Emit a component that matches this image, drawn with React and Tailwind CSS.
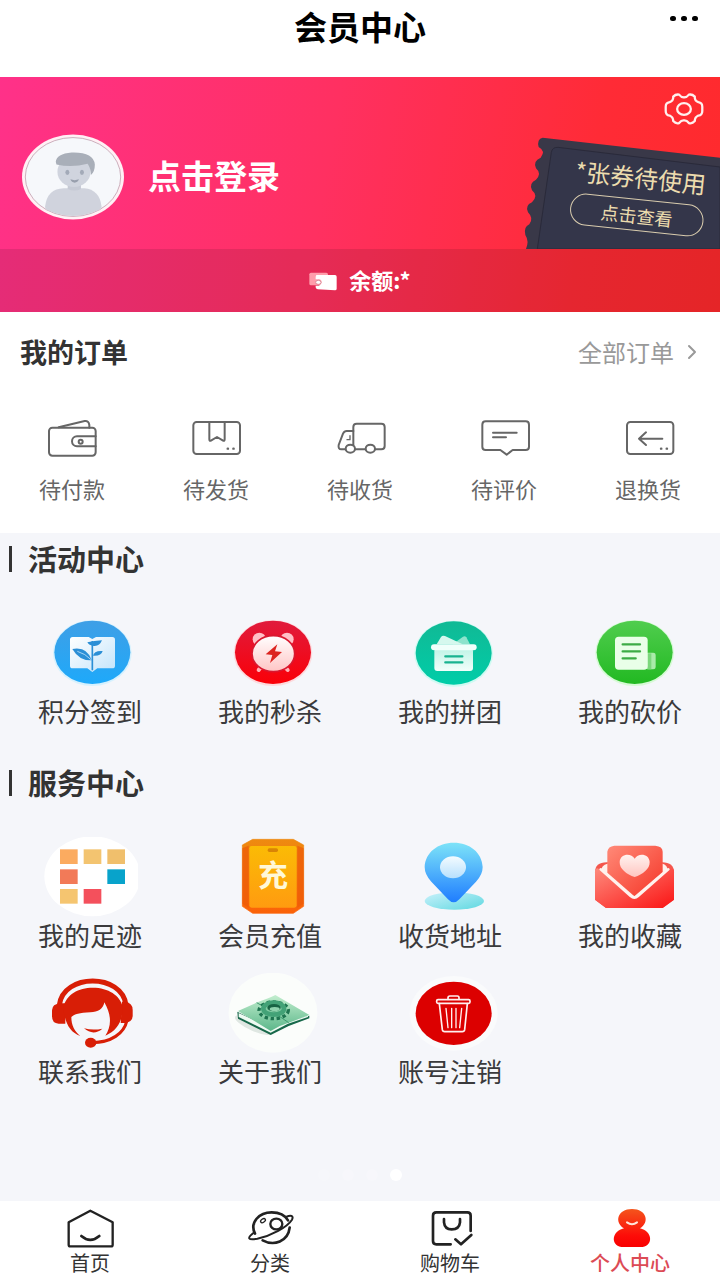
import { ChevronRight } from 'lucide-react';

function OrderIcon({ children }) {
  return (
    <svg
      viewBox="0 0 168 144"
      className="h-12 w-14"
      fill="none"
      stroke="#666"
      strokeWidth="6"
      strokeLinecap="round"
      strokeLinejoin="round"
      aria-hidden="true"
    >
      {children}
    </svg>
  );
}

function MenuIcon({ children }) {
  return (
    <svg viewBox="0 0 288 240" className="h-20 w-24" aria-hidden="true">
      {children}
    </svg>
  );
}

function TabIcon({ children }) {
  return (
    <svg
      viewBox="0 0 144 120"
      className="h-10 w-12"
      fill="none"
      stroke="#222"
      strokeWidth="8"
      strokeLinecap="round"
      strokeLinejoin="round"
      aria-hidden="true"
    >
      {children}
    </svg>
  );
}

function Gradient({ id, from, to, diagonal }) {
  return (
    <linearGradient id={id} x1="0" y1="0" x2={diagonal ? '1' : '0'} y2="1">
      <stop offset="0" stopColor={from} />
      <stop offset="1" stopColor={to} />
    </linearGradient>
  );
}

const orders = [
  {
    label: '待付款',
    icon: (
      <OrderIcon>
        <rect x="15" y="38" width="140" height="84" rx="10" />
        <path d="M44 37 L122 18 Q134 16 136 30 V38" />
        <path d="M155 64 H99 a15 15 0 0 0 0 30 H155" />
        <circle cx="110" cy="80" r="6" />
      </OrderIcon>
    ),
  },
  {
    label: '待发货',
    icon: (
      <OrderIcon>
        <rect x="16" y="21" width="140" height="96" rx="10" />
        <path d="M64 21 V73 Q64 80 70 76 L87 66 L104 76 Q110 80 110 73 V21" />
        <path d="M119 101 h1 M136 101 h1" strokeWidth="7" />
      </OrderIcon>
    ),
  },
  {
    label: '待收货',
    icon: (
      <OrderIcon>
        <path d="M64 90 V36 q0 -10 10 -10 h74 q10 0 10 10 v57 q0 10 -10 10 h-18" />
        <path d="M64 48 H44 q-7 0 -11 8 L20 90 q-2 13 8 13 h12 M70 103 H100" />
        <path d="M54 62 v12 h-9" strokeWidth="4" />
        <ellipse cx="55" cy="101" rx="14" ry="12" />
        <ellipse cx="115" cy="101" rx="14" ry="12" />
      </OrderIcon>
    ),
  },
  {
    label: '待评价',
    icon: (
      <OrderIcon>
        <path d="M73 105 H29 q-10 0 -10 -10 V29 q0 -10 10 -10 H149 q10 0 10 10 V95 q0 10 -10 10 H110 L92 119 Z" />
        <path d="M51 53 H122 M51 67 H90" />
      </OrderIcon>
    ),
  },
  {
    label: '退换货',
    icon: (
      <OrderIcon>
        <rect x="21" y="21" width="139" height="96" rx="10" />
        <path d="M57 71 H127 M78 52 L57 71 L78 90" />
        <path d="M123 101 h1 M140 101 h1" strokeWidth="7" />
      </OrderIcon>
    ),
  },
];

const activities = [
  {
    label: '积分签到',
    icon: (
      <MenuIcon>
        <defs>
          <Gradient id="sign" from="#3f9fe6" to="#1ea9fa" />
          <Gradient id="signBook" from="#ffffff" to="#c3e4fb" diagonal />
        </defs>
        <ellipse cx="151" cy="120" rx="118" ry="99" fill="#c9efff" opacity="0.7" />
        <ellipse cx="151" cy="118" rx="114" ry="95" fill="url(#sign)" />
        <path d="M92 72 H140 L151 78 L162 72 H211 Q219 72 219 80 V158 Q219 166 211 166 H166 L151 177 L136 166 H92 Q84 166 84 158 V80 Q84 72 92 72 Z" fill="url(#signBook)" />
        <path d="M151 172 V84" stroke="#2b8fd6" strokeWidth="5" fill="none" />
        <path d="M91 108 Q136 100 149 142 Q112 144 91 108 Z" fill="#2b8fd6" />
        <path d="M106 115 Q130 122 147 140" stroke="#a5d5f6" strokeWidth="3" fill="none" />
        <path d="M136 88 Q156 84 180 82 Q172 102 152 98 Q142 98 136 88 Z" fill="#2b8fd6" />
        <path d="M153 128 Q156 112 182 114 Q178 130 153 128 Z" fill="#2b8fd6" />
      </MenuIcon>
    ),
  },
  {
    label: '我的秒杀',
    icon: (
      <MenuIcon>
        <defs>
          <Gradient id="flash" from="#e01b3c" to="#fa0008" />
          <Gradient id="clock" from="#ffffff" to="#ffc5c5" />
        </defs>
        <ellipse cx="153" cy="120" rx="118" ry="99" fill="#ffd3d6" opacity="0.8" />
        <ellipse cx="153" cy="118" rx="114" ry="95" fill="url(#flash)" />
        <circle cx="112" cy="79" r="20" fill="#ffc0c6" />
        <circle cx="195" cy="79" r="20" fill="#ffc0c6" />
        <path d="M117 162 L110 171 M189 162 L197 171" stroke="#ffb4b8" strokeWidth="12" strokeLinecap="round" />
        <ellipse cx="154" cy="122" rx="64" ry="54" fill="url(#clock)" stroke="#d9182f" strokeWidth="5" />
        <path d="M166 94 L131 124 L151 126 L144 150 L180 117 L159 115 Z" fill="#dc2420" />
      </MenuIcon>
    ),
  },
  {
    label: '我的拼团',
    icon: (
      <MenuIcon>
        <defs>
          <Gradient id="group" from="#11b995" to="#00cda8" />
          <Gradient id="groupBox" from="#bff3e6" to="#f2fffb" />
        </defs>
        <ellipse cx="155" cy="122" rx="118" ry="99" fill="#c6fbf0" opacity="0.8" />
        <ellipse cx="155" cy="120" rx="114" ry="95" fill="url(#group)" />
        <path d="M152 94 L183 71 Q189 67 193 73 L204 94 Z" fill="#8ce3cc" />
        <path d="M104 94 L117 72 Q121 66 129 69 L182 94 Z" fill="#d5f8ee" />
        <rect x="97" y="106" width="116" height="68" rx="9" fill="url(#groupBox)" />
        <rect x="87" y="94" width="137" height="18" rx="9" fill="#f0fffb" />
        <path d="M130 130 H181 M130 148 H181" stroke="#18b390" strokeWidth="7" strokeLinecap="round" />
      </MenuIcon>
    ),
  },
  {
    label: '我的砍价',
    icon: (
      <MenuIcon>
        <defs>
          <Gradient id="bargain" from="#50cd4e" to="#22b922" />
        </defs>
        <ellipse cx="158" cy="120" rx="118" ry="99" fill="#d3fbd0" opacity="0.9" />
        <ellipse cx="158" cy="118" rx="114" ry="95" fill="url(#bargain)" />
        <rect x="190" y="119" width="31" height="50" rx="7" fill="#a9eba9" />
        <rect x="197" y="121" width="11" height="48" fill="#7cd77d" />
        <rect x="99" y="71" width="98" height="99" rx="11" fill="#e9ffe8" />
        <path d="M122 94 H174 M122 115 H174 M122 136 H161" stroke="#3dac46" strokeWidth="7" strokeLinecap="round" />
      </MenuIcon>
    ),
  },
];

const services = [
  {
    label: '我的足迹',
    icon: (
      <MenuIcon>
        <ellipse cx="151" cy="118" rx="144" ry="120" fill="#fff" />
        <rect x="54" y="37" width="53" height="44" fill="#fbab60" />
        <rect x="125" y="37" width="53" height="44" fill="#f3c470" />
        <rect x="196" y="37" width="53" height="44" fill="#f0bf6c" />
        <rect x="54" y="97" width="53" height="44" fill="#f27a58" />
        <rect x="196" y="97" width="53" height="44" fill="#08a3cb" />
        <rect x="54" y="156" width="53" height="44" fill="#f5c570" />
        <rect x="125" y="156" width="53" height="44" fill="#f4505c" />
      </MenuIcon>
    ),
  },
  {
    label: '会员充值',
    icon: (
      <MenuIcon>
        <defs>
          <Gradient id="card" from="#ee8a10" to="#fb6208" />
          <Gradient id="cardFace" from="#fbbb05" to="#ff9b10" />
        </defs>
        <path d="M92 7 H214 L245 24 V208 L214 229 H92 L61 208 V24 Z" fill="url(#card)" stroke="url(#card)" strokeWidth="2" strokeLinejoin="round" />
        <path d="M61 34 L80 26 V212 L61 200 Z M245 34 L226 26 V212 L245 200 Z" fill="#ec5a08" opacity="0.7" />
        <rect x="82" y="27" width="142" height="185" rx="7" fill="url(#cardFace)" />
        <rect x="137" y="34" width="31" height="11" rx="5" fill="#d98405" />
        <text x="153" y="147" textAnchor="middle" fontSize="90" fontWeight="700" fill="#fff8d8">充</text>
      </MenuIcon>
    ),
  },
  {
    label: '收货地址',
    icon: (
      <MenuIcon>
        <defs>
          <Gradient id="pin" from="#7de3f8" to="#1f7dff" />
          <Gradient id="pinBase" from="#c9f1fb" to="#5ed8e0" diagonal />
          <Gradient id="pinHole" from="#f3fbff" to="#b7e0fd" />
        </defs>
        <ellipse cx="157" cy="192" rx="89" ry="26" fill="url(#pinBase)" />
        <path d="M155 196 Q146 196 138 187 L88 134 Q68 113 68 90 C70 46 108 17 155 17 C203 17 240 46 242 90 Q242 113 222 134 L172 187 Q164 196 155 196 Z" fill="url(#pin)" />
        <ellipse cx="153" cy="91" rx="39" ry="33" fill="url(#pinHole)" />
      </MenuIcon>
    ),
  },
  {
    label: '我的收藏',
    icon: (
      <MenuIcon>
        <defs>
          <Gradient id="mail" from="#fd8a7c" to="#fb1414" diagonal />
          <Gradient id="letter" from="#ff8a78" to="#f53527" diagonal />
          <Gradient id="heart" from="#fff2ef" to="#ffc5c0" />
        </defs>
        <path d="M74 76 Q39 76 39 106 V188 L72 213 H242 L276 188 V106 Q276 76 240 76 Z" fill="#f4564c" />
        <path d="M76 80 Q58 84 58 101 L157 186 L257 101 Q257 84 242 80 Z" fill="#fff0ec" />
        <path d="M97 26 H220 Q242 28 242 44 V105 L157 178 L76 107 V44 Q78 28 97 26 Z" fill="url(#letter)" />
        <path d="M39 100 Q44 88 54 98 L145 178 Q157 190 169 178 L262 98 Q272 88 276 100 V188 L242 213 H72 L39 188 Z" fill="url(#mail)" />
        <path d="M56 97 L146 177 Q157 186 168 177 L259 97" fill="none" stroke="#fff2ee" strokeWidth="8" strokeLinecap="round" />
        <path d="M158 120 C134 112 112 96 113 75 C114 50 147 46 158 65 C169 46 202 50 203 75 C204 96 182 112 158 120 Z" fill="url(#heart)" />
      </MenuIcon>
    ),
  },
  {
    label: '联系我们',
    icon: (
      <MenuIcon>
        <path d="M52 96 C64 0 240 0 252 96" fill="none" stroke="#d81e06" strokeWidth="15" />
        <path d="M56 91 H70 V152 H50 Q30 152 30 130 V112 Q30 93 56 91 Z" fill="#d81e06" />
        <path d="M240 86 H250 Q272 90 272 110 V128 Q272 146 250 150 H236 Z" fill="#d81e06" />
        <path d="M115 189 C84 178 68 150 64 104 C72 64 110 44 152 44 C200 44 234 68 242 100 C242 146 226 172 190 188 C208 160 210 128 187 88 C184 108 168 117 145 118 C112 119 98 124 88 132 C88 158 98 175 115 189 Z" fill="#d81e06" />
        <path d="M126 166 Q153 173 181 167 Q154 190 126 166 Z" fill="#d81e06" />
        <path d="M150 209 C208 208 246 182 255 142" fill="none" stroke="#d81e06" strokeWidth="9" />
        <ellipse cx="146" cy="209" rx="17" ry="15" fill="#d81e06" />
      </MenuIcon>
    ),
  },
  {
    label: '关于我们',
    icon: (
      <MenuIcon>
        <defs>
          <Gradient id="book" from="#c3eecf" to="#5cb78a" />
        </defs>
        <ellipse cx="153" cy="119" rx="133" ry="120" fill="#fbfdfb" />
        <ellipse cx="96" cy="156" rx="62" ry="18" fill="#dfe7e2" transform="rotate(24 96 156)" />
        <path d="M46 116 L48 137 L146 186 L200 159 L262 136 V128 L146 166 Z" fill="#17684a" />
        <path d="M50 120 V132 L146 179 L198 152 L258 132 V128 L146 164 Z" fill="#eefaf2" />
        <path d="M48 114 L106 88 Q140 76 160 66 L262 126 L204 148 Q176 156 146 174 Z" fill="url(#book)" />
        <path d="M104 89 Q150 112 200 149" fill="none" stroke="#3f9a70" strokeWidth="3" />
        <ellipse cx="155" cy="112" rx="44" ry="25" fill="none" stroke="#1e7450" strokeWidth="10" strokeDasharray="10 8" />
        <ellipse cx="155" cy="107" rx="31" ry="18" fill="#80cba2" stroke="#43a277" strokeWidth="14" />
        <ellipse cx="156" cy="104" rx="20" ry="11" fill="#186344" />
        <ellipse cx="158" cy="108" rx="15" ry="6" fill="#8fd3ae" />
      </MenuIcon>
    ),
  },
  {
    label: '账号注销',
    icon: (
      <MenuIcon>
        <ellipse cx="155" cy="121" rx="132" ry="112" fill="#fafbfc" />
        <ellipse cx="155" cy="121" rx="114" ry="95" fill="#dc0000" />
        <g fill="none" stroke="#fff0f0" strokeWidth="5" strokeLinecap="round" strokeLinejoin="round">
          <rect x="104" y="80" width="100" height="11" rx="4" />
          <path d="M138 79 V74 Q138 69 144 69 H166 Q171 69 171 74 V79" />
          <path d="M112 92 L121 170 Q122 176 128 176 H181 Q187 176 188 170 L196 92" />
          <path d="M132 106 L138 164 M149 106 V164 M162 106 V164 M179 106 L173 164" strokeWidth="4" />
        </g>
      </MenuIcon>
    ),
  },
];

const tabs = [
  {
    label: '首页',
    icon: (
      <TabIcon>
        <path d="M73 5 L140 40 V107 Q140 112 135 112 H13 Q8 112 8 107 V40 Z" strokeWidth="7" />
        <path d="M46 81 Q73 104 100 81" />
      </TabIcon>
    ),
  },
  {
    label: '分类',
    icon: (
      <TabIcon>
        <path d="M27 74 C10 40 40 10 77 10 C102 10 118 20 126 34 M131 56 C126 98 84 112 50 94" />
        <path d="M22 72 C2 88 6 94 34 89 C76 80 124 54 138 32 C144 19 134 18 120 24" strokeWidth="6" />
        <ellipse cx="91" cy="45" rx="18" ry="16" strokeWidth="7" />
        <ellipse cx="51" cy="35" rx="8" ry="5" strokeWidth="4" transform="rotate(-35 51 35)" />
      </TabIcon>
    ),
  },
  {
    label: '购物车',
    icon: (
      <TabIcon>
        <path d="M74 106 H31 Q21 106 21 96 V20 Q21 10 31 10 H124 Q134 10 134 20 V66" />
        <path d="M54 30 V40 Q56 61 77 61 Q100 61 102 40 V30" />
        <path d="M88 91 L105 106 L136 78" />
      </TabIcon>
    ),
  },
  {
    label: '个人中心',
    active: true,
    icon: (
      <TabIcon>
        <defs>
          <linearGradient id="me" gradientUnits="userSpaceOnUse" x1="0" y1="0" x2="0" y2="115">
            <stop offset="0" stopColor="#f4551c" />
            <stop offset="0.7" stopColor="#fd0c08" />
            <stop offset="1" stopColor="#f80000" />
          </linearGradient>
        </defs>
        <path d="M78 0 C122 0 132 40 102 58 C138 66 144 108 110 114 H46 C12 108 18 66 54 58 C24 40 34 0 78 0 Z" fill="url(#me)" stroke="none" />
        <path d="M63 40 Q78 51 93 40" stroke="#ffe6dc" strokeWidth="6" />
      </TabIcon>
    ),
  },
];

function Avatar() {
  return (
    <svg viewBox="0 0 308 256" className="h-[86px] w-[102px]" aria-hidden="true">
      <defs>
        <clipPath id="face">
          <ellipse cx="154" cy="128" rx="143" ry="118" />
        </clipPath>
      </defs>
      <ellipse cx="154" cy="128" rx="154" ry="128" fill="#fff0f5" />
      <ellipse cx="154" cy="128" rx="144" ry="119" fill="#f6f8fb" stroke="#b48a9c" strokeWidth="2" />
      <g clipPath="url(#face)">
        <path d="M70 256 V216 Q76 164 126 162 H188 Q234 166 240 216 V256 Z" fill="#d0d3dd" />
        <path d="M138 145 H178 V164 Q158 174 138 164 Z" fill="#c6cad5" />
        <ellipse cx="157" cy="112" rx="50" ry="46" fill="#d0d4de" />
        <path d="M102 82 Q104 58 150 54 Q216 52 220 90 Q220 112 208 122 Q208 102 198 88 Q150 100 104 90 Z" fill="#a9afb9" />
      </g>
      <ellipse cx="137" cy="114" rx="6" ry="8" fill="#a3aab8" />
      <ellipse cx="181" cy="114" rx="6" ry="8" fill="#a3aab8" />
      <path d="M146 135 Q159 140 172 135 Q168 145 159 145 Q150 145 146 135 Z" fill="#989fad" />
    </svg>
  );
}

function Coupon() {
  return (
    <div className="absolute right-0 bottom-0 h-28 w-[200px] overflow-hidden">
      <svg viewBox="0 0 600 336" className="absolute inset-0 h-full w-full" aria-hidden="true">
        <path d="M68 2 Q50 6 56 30 Q78 42 62 62 Q38 72 48 94 Q66 110 48 128 Q26 138 36 160 Q56 176 36 196 Q14 206 24 226 Q42 244 28 262 Q10 270 16 294 Q28 312 18 336 H600 V62 Z" fill="#393848" />
        <path d="M52 336 L94 46 Q97 30 114 31 L600 90 V336 Z" fill="#34364a" stroke="#2a2a3a" strokeWidth="3" />
      </svg>
      <div className="relative flex rotate-6 flex-col items-center gap-2 pt-6 pl-10 whitespace-nowrap text-[#ecdcae]">
        <p className="text-[24px] leading-7">*张券待使用</p>
        <button className="h-8 w-[134px] rounded-full border border-[#d9ccae] text-[18px] leading-6">
          点击查看
        </button>
      </div>
    </div>
  );
}

function MenuSection({ title, items }) {
  return (
    <section className="mb-8">
      <h2 className="flex h-[52px] items-center gap-4 pl-[9px] text-[29px] font-bold text-[#333]">
        <span className="h-[26px] w-[3px] bg-[#333]" />
        {title}
      </h2>
      <ul className="mt-7 grid grid-cols-4 gap-y-6">
        {items.map(item => (
          <li key={item.label}>
            <a href="#" className="flex flex-col items-center gap-1">
              {item.icon}
              <span className="text-[26px] leading-7 text-[#3a3a3c]">{item.label}</span>
            </a>
          </li>
        ))}
      </ul>
    </section>
  );
}

export default function App() {
  return (
    <div className="flex min-h-screen flex-col bg-[#f5f6fa] font-['Noto_Sans_CJK_SC',sans-serif]">
      <header className="grid h-[77px] grid-cols-[1fr_auto_1fr] items-start bg-white px-[22px] pt-2">
        <span />
        <h1 className="text-[33px] leading-9 font-bold text-black">会员中心</h1>
        <button aria-label="更多" className="flex h-5 items-center gap-[5px] justify-self-end">
          <span className="h-[5px] w-[6px] rounded-full bg-black" />
          <span className="h-[5px] w-[6px] rounded-full bg-black" />
          <span className="h-[5px] w-[6px] rounded-full bg-black" />
        </button>
      </header>

      <section className="bg-linear-[100deg,#ff3189,#ff3061_45%,#ff2b36_80%,#ff2a2c] text-white">
        <div className="relative h-[172px] px-[22px] pt-[57px]">
          <a href="#" className="inline-flex items-center gap-6">
            <Avatar />
            <span className="pb-1 text-[33px] leading-10 font-bold">点击登录</span>
          </a>
          <button aria-label="设置" className="absolute top-4 right-4">
            <svg viewBox="0 0 120 98" className="h-8 w-10" fill="none" stroke="#fff0ee" strokeWidth="7" strokeLinejoin="round">
              <path d="M45 5 Q52 14 60 13 Q68 14 75 5 Q85 3 93 11 Q92 24 104 28 Q116 30 116 42 V55 Q116 68 104 69 Q93 74 93 86 Q85 95 75 92 Q68 83 60 84 Q52 83 45 92 Q35 95 27 86 Q27 74 16 69 Q4 68 4 55 V42 Q4 30 16 28 Q28 24 27 11 Q35 3 45 5 Z" />
              <ellipse cx="60" cy="49" rx="21" ry="18" />
            </svg>
          </button>
          <Coupon />
        </div>
        <div className="flex h-[63px] items-center justify-center gap-3 bg-black/10">
          <svg viewBox="0 0 84 60" className="h-5 w-7" aria-hidden="true">
            <rect x="1" y="5" width="56" height="38" rx="5" fill="#ff9dab" />
            <path d="M22 12 H78 Q83 12 83 17 V53 Q83 58 78 58 L26 55 Q20 54 20 49 V44 H30 Q38 42 38 34 Q38 26 30 25 H20 V17 Z" fill="#fff" />
            <ellipse cx="28" cy="34" rx="8" ry="6" fill="#fff" stroke="#c9707e" strokeWidth="2" />
          </svg>
          <span className="pb-1 text-[22px] leading-8 font-bold">余额:*</span>
        </div>
      </section>

      <section className="bg-white pt-5 pb-[31px]">
        <div className="flex items-center justify-between pr-4 pl-5">
          <h2 className="text-[27px] leading-10 font-bold text-[#333]">我的订单</h2>
          <a href="#" className="flex items-center gap-[6px] text-[24px] leading-10 text-[#999]">
            全部订单
            <ChevronRight className="h-6 w-6" strokeWidth={2} />
          </a>
        </div>
        <ul className="mt-[43px] grid grid-cols-5">
          {orders.map(order => (
            <li key={order.label}>
              <a href="#" className="flex flex-col items-center gap-[11px]">
                {order.icon}
                <span className="text-[22px] leading-7 text-[#666]">{order.label}</span>
              </a>
            </li>
          ))}
        </ul>
      </section>

      <main className="flex flex-1 flex-col">
        <MenuSection title="活动中心" items={activities} />
        <MenuSection title="服务中心" items={services} />
        <div className="mt-auto mb-5 flex justify-center gap-3">
          <span className="size-3 rounded-full bg-white/10" />
          <span className="size-3 rounded-full bg-white/20" />
          <span className="size-3 rounded-full bg-white/20" />
          <span className="size-3 rounded-full bg-white" />
        </div>
      </main>

      <nav className="grid grid-cols-4 bg-white pt-2 pb-[5px]">
        {tabs.map(tab => (
          <a key={tab.label} href="#" className="flex flex-col items-center gap-[2px]">
            {tab.icon}
            <span className={tab.active ? 'text-[20px] leading-6 font-medium text-[#dc4b55]' : 'text-[20px] leading-6 text-[#333]'}>
              {tab.label}
            </span>
          </a>
        ))}
      </nav>
    </div>
  );
}
